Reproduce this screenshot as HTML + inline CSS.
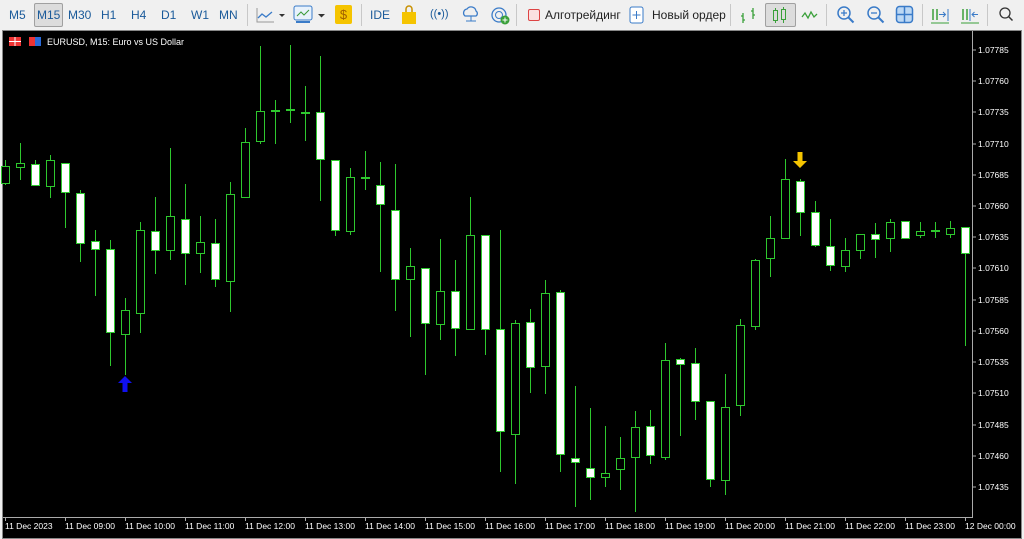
<!DOCTYPE html>
<html><head><meta charset="utf-8"><style>
body{margin:0;width:1024px;height:539px;overflow:hidden;background:#f0f0f0;font-family:"Liberation Sans",sans-serif;position:relative}
.tb{position:absolute;top:0;left:0;width:1024px;height:30px;background:#f0f0f0;font-size:12px;color:#1a5a9a}
.tb span{position:absolute;top:8px}
.sep{position:absolute;top:4px;width:1px;height:22px;background:#c8c8c8}
.chart{position:absolute;left:2px;top:30px;width:1020px;height:509px;background:#000;border:1px solid #888;box-sizing:border-box}
</style></head><body>
<div class="tb">
<span style="left:9px">M5</span>
<div style="position:absolute;left:34px;top:3px;width:27px;height:22px;border:1px solid #a0a0a0;background:#dcdcdc;border-radius:2px"></div>
<span style="left:37px">M15</span><span style="left:68px">M30</span><span style="left:101px">H1</span><span style="left:131px">H4</span><span style="left:161px">D1</span><span style="left:191px">W1</span><span style="left:219px">MN</span>
<div class="sep" style="left:247px"></div>
<svg style="position:absolute;left:256px;top:6px" width="40" height="18"><path d="M2 12 L6 8 L10 11 L16 6" stroke="#3a7bc8" fill="none" stroke-width="1.3"/><path d="M1 2V16H18" stroke="#999" fill="none"/><path d="M23 8h6l-3 3z" fill="#333"/></svg>
<svg style="position:absolute;left:293px;top:4px" width="36" height="22"><rect x="1" y="2" width="18" height="14" rx="2" fill="#e8f2fc" stroke="#3a7bc8"/><path d="M4 12l4-4 3 3 5-5" stroke="#3a9a3a" fill="none"/><path d="M3 18h14" stroke="#3a7bc8" stroke-width="2"/><path d="M25 10h7l-3.5 3.5z" fill="#333"/></svg>
<div style="position:absolute;left:335px;top:5px;width:17px;height:19px;background:#f5c400;border-radius:2px;color:#a06000;font-size:13px;text-align:center;line-height:19px">$</div>
<div class="sep" style="left:361px"></div>
<span style="left:370px">IDE</span>
<svg style="position:absolute;left:400px;top:5px" width="18" height="20"><path d="M2 7h14v12H2z" fill="#f5c400"/><path d="M6 7V4a3 3 0 0 1 6 0v3" stroke="#c89000" fill="none" stroke-width="1.5"/></svg>
<span style="left:430px;font-size:11px">((•))</span>
<svg style="position:absolute;left:460px;top:5px" width="22" height="20"><path d="M5 11a4 4 0 0 1 2-7a5 5 0 0 1 9 2a3 3 0 0 1 0 5z" fill="none" stroke="#3a7bc8" stroke-width="1.3"/><path d="M11 11v5M6 16h10" stroke="#3a7bc8"/></svg>
<svg style="position:absolute;left:490px;top:5px" width="22" height="22"><circle cx="9" cy="10" r="7" fill="none" stroke="#3a7bc8" stroke-width="1.3"/><circle cx="9" cy="10" r="3.5" fill="none" stroke="#3a7bc8"/><circle cx="15" cy="15" r="4.5" fill="#3aa03a"/><path d="M15 12.5v5M12.5 15h5" stroke="#fff"/></svg>
<div class="sep" style="left:516px"></div>
<div style="position:absolute;left:528px;top:9px;width:10px;height:10px;border:1px solid #d44;background:#fbe0e0;border-radius:2px"></div>
<span style="left:545px;color:#222">Алготрейдинг</span>
<svg style="position:absolute;left:629px;top:5px" width="16" height="20"><rect x="1" y="2" width="13" height="16" rx="2" fill="#fff" stroke="#3a7bc8"/><path d="M7.5 6v8M3.5 10h8" stroke="#3a7bc8"/></svg>
<span style="left:652px;color:#222">Новый ордер</span>
<div class="sep" style="left:730px"></div>
<svg style="position:absolute;left:738px;top:5px" width="22" height="20"><path d="M5 8v10M3 11h2M5 15h2M15 3v11M13 6h2M15 10h2" stroke="#3aa03a" stroke-width="1.3"/></svg>
<div style="position:absolute;left:765px;top:3px;width:29px;height:22px;border:1px solid #a0a0a0;background:#dcdcdc;border-radius:2px"></div>
<svg style="position:absolute;left:770px;top:5px" width="20" height="20"><rect x="3.5" y="5.5" width="4" height="10" fill="none" stroke="#3aa03a"/><rect x="11.5" y="4.5" width="4" height="10" fill="none" stroke="#3aa03a"/><path d="M5.5 3v2M5.5 16v2M13.5 2v2M13.5 15v3" stroke="#3aa03a"/></svg>
<svg style="position:absolute;left:800px;top:6px" width="22" height="18"><path d="M2 11l3-4 3 5 3-6 3 5 3-3" stroke="#3aa03a" fill="none" stroke-width="1.3"/></svg>
<div class="sep" style="left:826px"></div>
<svg style="position:absolute;left:836px;top:5px" width="20" height="20"><circle cx="8" cy="8" r="6" fill="none" stroke="#3a7bc8" stroke-width="1.5"/><path d="M12.5 12.5l5 5" stroke="#3a7bc8" stroke-width="2"/><path d="M8 5v6M5 8h6" stroke="#3a7bc8" stroke-width="1.3"/></svg>
<svg style="position:absolute;left:866px;top:5px" width="20" height="20"><circle cx="8" cy="8" r="6" fill="none" stroke="#3a7bc8" stroke-width="1.5"/><path d="M12.5 12.5l5 5" stroke="#3a7bc8" stroke-width="2"/><path d="M5 8h6" stroke="#3a7bc8" stroke-width="1.3"/></svg>
<svg style="position:absolute;left:895px;top:5px" width="20" height="20"><rect x="1.5" y="1.5" width="16" height="16" rx="3" fill="#bcd8f4" stroke="#3a7bc8" stroke-width="1.5"/><path d="M9.5 2v15M2 9.5h15" stroke="#3a7bc8" stroke-width="1.5"/></svg>
<div class="sep" style="left:922px"></div>
<svg style="position:absolute;left:930px;top:5px" width="22" height="20"><path d="M3 4v11M7 4v11" stroke="#3aa03a" stroke-width="1.5"/><path d="M9 9.5h6M13 7l2.5 2.5L13 12" stroke="#3a7bc8" fill="none"/><path d="M18 4v12" stroke="#3a7bc8"/><path d="M1 18h18" stroke="#3aa03a"/></svg>
<svg style="position:absolute;left:960px;top:5px" width="22" height="20"><path d="M3 4v11M7 4v11" stroke="#3aa03a" stroke-width="1.5"/><path d="M10 4v12" stroke="#3a7bc8"/><path d="M12 9.5h6M14.5 7L12 9.5 14.5 12" stroke="#3a7bc8" fill="none"/><path d="M1 18h18" stroke="#3aa03a"/></svg>
<div class="sep" style="left:987px"></div>
<svg style="position:absolute;left:998px;top:6px" width="18" height="18"><circle cx="7" cy="7" r="5" fill="none" stroke="#333" stroke-width="1.3"/><path d="M10.5 10.5l4 4" stroke="#333" stroke-width="1.5"/></svg>
</div>
<div class="chart"></div>
<svg style="position:absolute;left:0;top:0" width="1024" height="539" font-family="Liberation Sans, sans-serif" font-size="9">
<rect x="9" y="37" width="12" height="9" fill="#e33"/><path d="M9 41.5h12M15 37v9" stroke="#fff"/>
<rect x="29" y="37" width="12" height="9" fill="#e33"/><rect x="35" y="37" width="6" height="9" fill="#2a6ad8"/>
<text x="47" y="45" fill="#fff">EURUSD, M15:  Euro vs US Dollar</text>
<g stroke="#aaa" fill="none"><path d="M972.5 31V517.5H3"/>
<path d="M972 50h4M972 81h4M972 112h4M972 144h4M972 175h4M972 206h4M972 237h4M972 268h4M972 300h4M972 331h4M972 362h4M972 393h4M972 425h4M972 456h4M972 487h4"/>
<path d="M5.5 517v4M65.5 517v4M125.5 517v4M185.5 517v4M245.5 517v4M305.5 517v4M365.5 517v4M425.5 517v4M485.5 517v4M545.5 517v4M605.5 517v4M665.5 517v4M725.5 517v4M785.5 517v4M845.5 517v4M905.5 517v4M965.5 517v4"/></g>
<g font-size="8.5" fill="#fff"><text x="978" y="53">1.07785</text><text x="978" y="84">1.07760</text><text x="978" y="115">1.07735</text><text x="978" y="147">1.07710</text><text x="978" y="178">1.07685</text><text x="978" y="209">1.07660</text><text x="978" y="240">1.07635</text><text x="978" y="271">1.07610</text><text x="978" y="303">1.07585</text><text x="978" y="334">1.07560</text><text x="978" y="365">1.07535</text><text x="978" y="396">1.07510</text><text x="978" y="428">1.07485</text><text x="978" y="459">1.07460</text><text x="978" y="490">1.07435</text>
<text x="5" y="529">11 Dec 2023</text><text x="65" y="529">11 Dec 09:00</text><text x="125" y="529">11 Dec 10:00</text><text x="185" y="529">11 Dec 11:00</text><text x="245" y="529">11 Dec 12:00</text><text x="305" y="529">11 Dec 13:00</text><text x="365" y="529">11 Dec 14:00</text><text x="425" y="529">11 Dec 15:00</text><text x="485" y="529">11 Dec 16:00</text><text x="545" y="529">11 Dec 17:00</text><text x="605" y="529">11 Dec 18:00</text><text x="665" y="529">11 Dec 19:00</text><text x="725" y="529">11 Dec 20:00</text><text x="785" y="529">11 Dec 21:00</text><text x="845" y="529">11 Dec 22:00</text><text x="905" y="529">11 Dec 23:00</text><text x="965" y="529">12 Dec 00:00</text></g>
<g stroke="#2ec82e" stroke-width="1">
<path fill="none" d="M5.5 160V185M20.5 143V180M35.5 160V185M50.5 155V198M65.5 163V228M80.5 190V262M95.5 230V296M110.5 240V366M125.5 298V375M140.5 222V333M155.5 197V274M170.5 148V260M185.5 184V285M200.5 216V273M215.5 219V287M230.5 182V312M245.5 128V197M260.5 46V144M275.5 100V144M290.5 45V123M305.5 86V141M320.5 56V201M335.5 160V236M350.5 168V235M365.5 151V190M380.5 162V272M395.5 164V311M410.5 248V337M425.5 268V375M440.5 239V340M455.5 260V356M470.5 197V330M485.5 235V355M500.5 230V472M515.5 320V484M530.5 309V393M545.5 280V394M560.5 290V472M575.5 386V507M590.5 408V500M605.5 426V487M620.5 437V490M635.5 411V512M650.5 410V464M665.5 343V460M680.5 358V436M695.5 348V420M710.5 401V487M725.5 374V495M740.5 319V416M755.5 259V330M770.5 216V277M785.5 159V238M800.5 179V236M815.5 201V247M830.5 219V271M845.5 238V272M860.5 234V259M875.5 223V258M890.5 219V252M905.5 221V238M920.5 222V238M935.5 222V238M950.5 221V238M965.5 227V346"/>
<path fill="none" d="M271 111h9M286 110h9M301 113h9M361 178h9M931 231h9" stroke-width="2"/>
<g fill="#000">
<rect x="1.5" y="166.5" width="8" height="17"/><rect x="16.5" y="163.5" width="8" height="4"/><rect x="46.5" y="160.5" width="8" height="26"/><rect x="121.5" y="310.5" width="8" height="24"/><rect x="136.5" y="230.5" width="8" height="83"/><rect x="166.5" y="216.5" width="8" height="34"/><rect x="196.5" y="242.5" width="8" height="11"/><rect x="226.5" y="194.5" width="8" height="87"/><rect x="241.5" y="142.5" width="8" height="55"/><rect x="256.5" y="111.5" width="8" height="30"/><rect x="346.5" y="177.5" width="8" height="54"/><rect x="406.5" y="266.5" width="8" height="13"/><rect x="436.5" y="291.5" width="8" height="33"/><rect x="466.5" y="235.5" width="8" height="94"/><rect x="511.5" y="323.5" width="8" height="111"/><rect x="541.5" y="293.5" width="8" height="73"/><rect x="601.5" y="473.5" width="8" height="4"/><rect x="616.5" y="458.5" width="8" height="11"/><rect x="631.5" y="427.5" width="8" height="30"/><rect x="661.5" y="360.5" width="8" height="97"/><rect x="721.5" y="407.5" width="8" height="73"/><rect x="736.5" y="325.5" width="8" height="80"/><rect x="751.5" y="260.5" width="8" height="66"/><rect x="766.5" y="238.5" width="8" height="20"/><rect x="781.5" y="179.5" width="8" height="59"/><rect x="841.5" y="250.5" width="8" height="16"/><rect x="856.5" y="234.5" width="8" height="16"/><rect x="886.5" y="222.5" width="8" height="16"/><rect x="916.5" y="231.5" width="8" height="4"/><rect x="946.5" y="228.5" width="8" height="6"/>
</g>
<g fill="#fff">
<rect x="31.5" y="164.5" width="8" height="21"/><rect x="61.5" y="163.5" width="8" height="29"/><rect x="76.5" y="193.5" width="8" height="50"/><rect x="91.5" y="241.5" width="8" height="8"/><rect x="106.5" y="249.5" width="8" height="83"/><rect x="151.5" y="231.5" width="8" height="19"/><rect x="181.5" y="219.5" width="8" height="34"/><rect x="211.5" y="243.5" width="8" height="36"/><rect x="316.5" y="112.5" width="8" height="47"/><rect x="331.5" y="160.5" width="8" height="70"/><rect x="376.5" y="185.5" width="8" height="19"/><rect x="391.5" y="210.5" width="8" height="69"/><rect x="421.5" y="268.5" width="8" height="55"/><rect x="451.5" y="291.5" width="8" height="37"/><rect x="481.5" y="235.5" width="8" height="94"/><rect x="496.5" y="329.5" width="8" height="102"/><rect x="526.5" y="322.5" width="8" height="45"/><rect x="556.5" y="292.5" width="8" height="162"/><rect x="571.5" y="458.5" width="8" height="4"/><rect x="586.5" y="468.5" width="8" height="9"/><rect x="646.5" y="426.5" width="8" height="29"/><rect x="676.5" y="359.5" width="8" height="5"/><rect x="691.5" y="363.5" width="8" height="38"/><rect x="706.5" y="401.5" width="8" height="78"/><rect x="796.5" y="181.5" width="8" height="31"/><rect x="811.5" y="212.5" width="8" height="33"/><rect x="826.5" y="246.5" width="8" height="19"/><rect x="871.5" y="234.5" width="8" height="5"/><rect x="901.5" y="221.5" width="8" height="17"/><rect x="961.5" y="227.5" width="8" height="26"/>
</g></g>
<path d="M125 376l-7 7h4.5v9h5v-9h4.5z" fill="#1010f0"/>
<path d="M800 168l-7-7h4.5v-9h5v9h4.5z" fill="#f5c400"/>
</svg>
</body></html>
